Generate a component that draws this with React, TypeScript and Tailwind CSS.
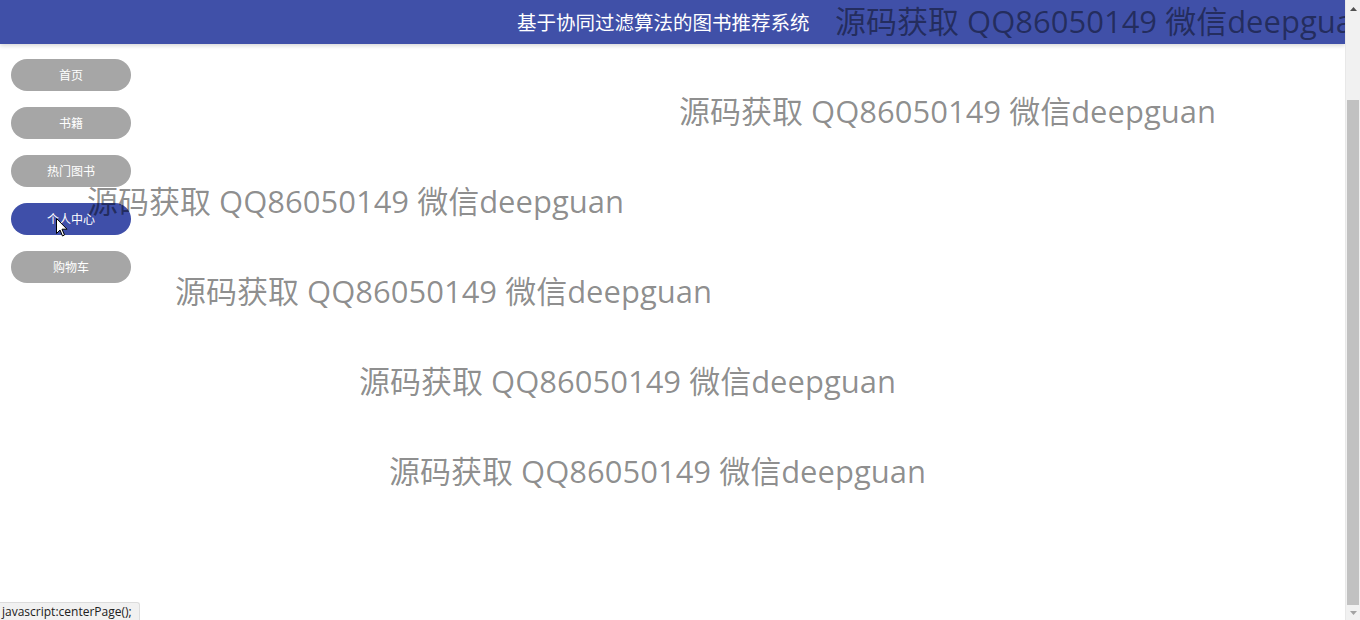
import React from 'react';

const navItems = [
  { name: '首页', active: false },
  { name: '书籍', active: false },
  { name: '热门图书', active: false },
  { name: '个人中心', active: true },
  { name: '购物车', active: false },
];

const marks = [
  'left-[835px] top-[0px]',
  'left-[679px] top-[90px]',
  'left-[87px] top-[180px]',
  'left-[175px] top-[270px]',
  'left-[359px] top-[360px]',
  'left-[389px] top-[450px]',
];

const WATERMARK = '源码获取 QQ86050149 微信deepguan';

const App: React.FC = () => {
  return (
    <div className="flex h-[620px] w-[1360px] overflow-hidden bg-white font-['Noto_Sans_CJK_SC',sans-serif]">
      {/* Page */}
      <div className="relative flex-1 overflow-hidden">
        <header className="h-[44px] bg-[#4050a8] shadow-[0_2px_4px_rgba(0,0,0,0.15)] flex items-center justify-start pl-[517px]">
          <span className="text-white text-[19.5px] leading-none">基于协同过滤算法的图书推荐系统</span>
        </header>

        {/* Sidebar */}
        <nav className="flex flex-col gap-4 pl-[11px] pt-[15px] w-[131px]">
          {navItems.map((item) => (
            <a
              key={item.name}
              href="#"
              className={`flex h-[32px] w-[120px] items-center justify-center rounded-full text-[12px] text-white ${item.active ? 'bg-[#3f4fa9]' : 'bg-[#a6a6a6]'}`}
            >
              {item.name}
            </a>
          ))}
        </nav>

        {/* Watermarks */}
        {marks.map((pos, i) => (
          <span
            key={i}
            className={`pointer-events-none absolute ${pos} whitespace-nowrap font-['Open_Sans','Noto_Sans_CJK_SC',sans-serif] text-[31px] leading-[42px] text-black/45`}
          >
            {WATERMARK}
          </span>
        ))}

        {/* Mouse cursor */}
        <svg className="pointer-events-none absolute left-[56px] top-[218px]" width="12" height="19" viewBox="0 0 12 19">
          <path d="M0.5 0.5 L0.5 15.5 L4 12 L6.5 18 L8.5 17 L6 11.2 L11 11.2 Z" fill="#fff" stroke="#000" strokeWidth="1" strokeLinejoin="round" />
        </svg>

        {/* Status bar */}
        <div className="absolute bottom-0 left-0 h-[18px] rounded-tr-[3px] border-t border-r border-[#dcdcdc] bg-[#f1f1f1] pl-[2px] pr-[7px] text-[12px] leading-[17px] text-[#202020] font-['Open_Sans',sans-serif]">
          javascript:centerPage();
        </div>
      </div>

      {/* Scrollbar */}
      <div className="flex w-[15px] flex-col bg-[#f1f1f1] border-l border-[#e8e8e8]">
        <div className="flex h-[17px] items-center justify-center">
          <svg width="7" height="4" viewBox="0 0 7 4"><path d="M3.5 0 L7 4 L0 4 Z" fill="#505050" /></svg>
        </div>
        <div className="flex flex-1 flex-col px-[1px]">
          <div className="h-[83px]" />
          <div className="flex-1 bg-[#c1c1c1]" />
          <div className="h-[1px]" />
        </div>
        <div className="flex h-[14px] items-center justify-center">
          <svg width="7" height="4" viewBox="0 0 7 4"><path d="M0 0 L7 0 L3.5 4 Z" fill="#a3a3a3" /></svg>
        </div>
      </div>
    </div>
  );
};

export default App;
